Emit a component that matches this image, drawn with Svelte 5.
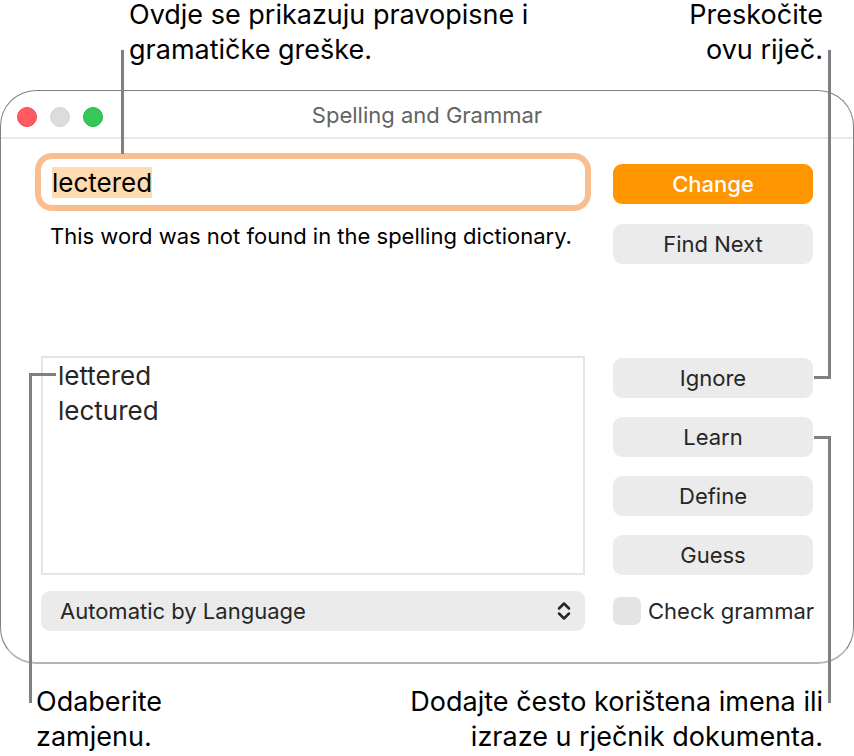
<script>
	import { onMount } from 'svelte';

	let word = $state('lectered');
	let language = $state('Automatic by Language');
	let checkGrammar = $state(false);
	let field;

	const suggestions = ['lettered', 'lectured'];
	const actions = ['Ignore', 'Learn', 'Define', 'Guess'];

	onMount(() => {
		field.focus();
		field.select();
	});
</script>

<div class="figure">
	<div class="captions top">
		<p><span>Ovdje se prikazuju pravopisne i</span> <span>gramatičke greške.</span></p>
		<p class="right"><span>Preskočite</span> <span>ovu riječ.</span></p>
	</div>

	<main class="window">
		<header class="titlebar">
			<div class="lights">
				<button class="light close" aria-label="Close"></button>
				<button class="light minimize" aria-label="Minimize" disabled></button>
				<button class="light zoom" aria-label="Zoom"></button>
			</div>
			<h1>Spelling and Grammar</h1>
		</header>

		<div class="content">
			<div class="entry">
				<input class="word" type="text" aria-label="Word" bind:value={word} bind:this={field} />
				<p class="message">This word was not found in the spelling dictionary.</p>
			</div>
			<div class="buttons main-actions">
				<button class="btn primary">Change</button>
				<button class="btn">Find Next</button>
			</div>

			<ul class="suggestions">
				{#each suggestions as suggestion}
					<li>{suggestion}</li>
				{/each}
			</ul>
			<div class="buttons more-actions">
				{#each actions as action}
					<button class="btn">{action}</button>
				{/each}
			</div>

			<div class="language">
				<select aria-label="Language" bind:value={language}>
					<option>Automatic by Language</option>
				</select>
				<svg width="14" height="20" viewBox="0 0 14 20" aria-hidden="true">
					<path d="M2 7.5 7 2.5 12 7.5M2 12.5 7 17.5 12 12.5" />
				</svg>
			</div>
			<label class="check">
				<input type="checkbox" bind:checked={checkGrammar} />
				Check grammar
			</label>
		</div>
	</main>

	<div class="captions bottom">
		<p><span>Odaberite</span> <span>zamjenu.</span></p>
		<p class="right">
			<span>Dodajte često korištena imena ili</span> <span>izraze u rječnik dokumenta.</span>
		</p>
	</div>

	<!-- lines from the captions to the controls -->
	<div class="callout to-word"></div>
	<div class="callout to-ignore"></div>
	<div class="callout to-suggestion"></div>
	<div class="callout to-learn"></div>
</div>

<style>
	:global(body) {
		background: #fff;
	}

	.figure,
	.figure :is(button, input, select) {
		font-family: Inter, 'Liberation Sans', sans-serif;
	}

	.figure {
		position: relative;
		color: #000;
	}

	p,
	h1,
	ul {
		margin: 0;
		padding: 0;
	}

	.captions {
		display: flex;
		justify-content: space-between;
		font-size: 27px;
		line-height: 29px;
		white-space: nowrap;
	}

	.captions p {
		display: flex;
		flex-direction: column;
		gap: 6px;
	}

	.captions.top {
		padding: 0 31px 0 129px;
	}

	.captions.bottom {
		padding: 23px 31px 0 36px;
	}

	.right {
		text-align: right;
	}

	.window {
		margin-top: 26px;
		border: 1px solid #808080;
		border-bottom: 2px solid #b4b4b4;
		border-radius: 36px;
		overflow: hidden;
	}

	.titlebar {
		display: grid;
		grid-template-columns: 1fr auto 1fr;
		align-items: center;
		height: 46px;
		padding: 0 16px;
		border-bottom: 2px solid #e9e9e9;
	}

	.lights {
		display: flex;
		gap: 13px;
		padding-top: 6px;
	}

	.light {
		width: 20px;
		height: 20px;
		padding: 0;
		border: 1px solid;
		border-radius: 50%;
	}

	.close {
		background: #ff5b60;
		border-color: #f9434b;
	}

	.minimize {
		background: #dcdcdc;
		border-color: #d3d3d3;
	}

	.zoom {
		background: #34c759;
		border-color: #1fb83c;
	}

	h1 {
		padding-top: 2px;
		color: #636363;
		font-size: 22px;
		font-weight: 400;
	}

	.content {
		display: grid;
		grid-template-columns: 1fr 200px;
		grid-template-rows: minmax(181px, auto) minmax(219px, auto) 40px;
		gap: 16px 28px;
		padding: 20px 40px 31px;
	}

	.word {
		box-sizing: border-box;
		width: 100%;
		height: 46px;
		padding: 0 11px;
		border: 0;
		border-radius: 11px;
		outline: 0;
		box-shadow: 0 0 0 6px #f9be90;
		color: #000;
		font-size: 26px;
	}

	.word::selection {
		background: #ffdcb0;
		color: #000;
	}

	.message {
		padding: 17px 0 0 9px;
		font-size: 22px;
		line-height: 28px;
		white-space: nowrap;
	}

	.buttons {
		display: flex;
		flex-direction: column;
	}

	.main-actions {
		gap: 20px;
		padding-top: 5px;
	}

	.more-actions {
		justify-content: space-between;
		padding-top: 2px;
	}

	.btn {
		height: 40px;
		padding: 0;
		border: 0;
		border-radius: 9px;
		background: #ebebeb;
		color: #262626;
		font-size: 22px;
	}

	.btn.primary {
		background: #ff9500;
		color: #fff;
		font-weight: 500;
	}

	.suggestions {
		border: 2px solid #e5e5e5;
		padding-left: 15px;
		color: #262626;
		font-size: 26px;
		line-height: 35px;
		list-style: none;
	}

	.language {
		position: relative;
	}

	select {
		appearance: none;
		width: 100%;
		height: 40px;
		padding: 0 40px 0 19px;
		border: 0;
		border-radius: 9px;
		background: #ebebeb;
		color: #262626;
		font-size: 22px;
	}

	.language svg {
		position: absolute;
		top: 10px;
		right: 14px;
		fill: none;
		stroke: #262626;
		stroke-width: 2.5;
		stroke-linecap: round;
		stroke-linejoin: round;
		pointer-events: none;
	}

	.check {
		display: flex;
		align-items: center;
		gap: 7px;
		color: #262626;
		font-size: 22px;
		white-space: nowrap;
	}

	.check input {
		appearance: none;
		flex: none;
		width: 28px;
		height: 28px;
		margin: 0;
		border-radius: 7px;
		background: #e4e4e4;
	}

	.check input:checked {
		background: #ff9500;
	}

	.callout {
		position: absolute;
		box-sizing: border-box;
		border: 0 solid #808080;
		pointer-events: none;
	}

	.to-word {
		top: 50px;
		left: 121px;
		height: 104px;
		border-left-width: 3px;
	}

	.to-ignore {
		top: 50px;
		right: 23px;
		width: 17px;
		height: 329px;
		border-width: 0 3px 3px 0;
	}

	.to-suggestion {
		top: 373px;
		left: 29px;
		width: 27px;
		height: 330px;
		border-width: 3px 0 0 3px;
	}

	.to-learn {
		top: 436px;
		right: 23px;
		width: 17px;
		height: 267px;
		border-width: 3px 3px 0 0;
	}
</style>
